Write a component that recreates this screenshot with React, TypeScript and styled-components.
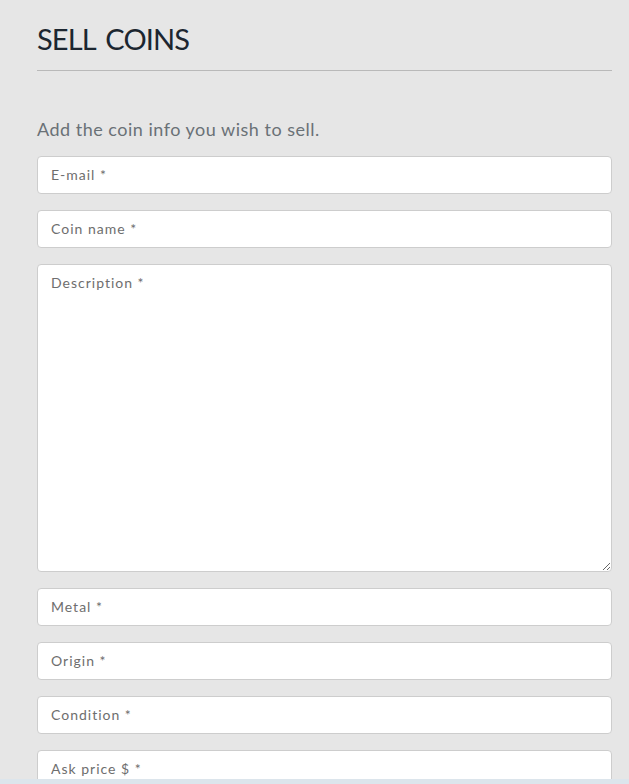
import React from "react";
import styled, { createGlobalStyle } from "styled-components";

const GlobalStyle = createGlobalStyle`
  html, body {
    margin: 0;
    padding: 0;
    background: #e6e6e6;
  }
  body {
    font-family: Lato, "Liberation Sans", sans-serif;
  }
  * { box-sizing: border-box; }
`;

const Page = styled.main`
  padding: 21px 17px 40px 37px;
  width: 629px;
`;

const Header = styled.header`
  border-bottom: 1px solid #b9b9b9;
  padding-bottom: 13px;
`;

const Title = styled.h1`
  margin: 0;
  font-family: Lato, "Liberation Sans", sans-serif;
  font-weight: 400;
  font-size: 29px;
  line-height: 36px;
  letter-spacing: -0.9px;
  word-spacing: 4px;
  color: #1c2630;
`;

const Intro = styled.p`
  margin: 47px 0 16px;
  font-size: 18px;
  line-height: 22px;
  letter-spacing: 0.5px;
  color: #6a7176;
`;

const Form = styled.form`
  display: flex;
  flex-direction: column;
  gap: 16px;
`;

const fieldBase = `
  display: block;
  width: 100%;
  margin: 0;
  background: #ffffff;
  border: 1px solid #cdcdcd;
  border-radius: 4px;
  font-family: Lato, "Liberation Sans", sans-serif;
  font-size: 14px;
  letter-spacing: 1px;
  color: #333;
  outline: none;
  &::placeholder {
    color: #6e6e6e;
    opacity: 1;
  }
`;

const Input = styled.input`
  ${fieldBase}
  height: 38px;
  padding: 0 13px 1px;
`;

const TextArea = styled.textarea`
  ${fieldBase}
  height: 308px;
  padding: 7px 13px;
  line-height: 21px;
  resize: vertical;
`;

const BottomBar = styled.div`
  position: fixed;
  left: 0;
  right: 0;
  bottom: 0;
  height: 5px;
  background: #dce5ec;
`;

export default function App() {
  return (
    <>
      <GlobalStyle />
      <Page>
        <Header>
          <Title>SELL COINS</Title>
        </Header>
        <Intro>Add the coin info you wish to sell.</Intro>
        <Form onSubmit={(e) => e.preventDefault()}>
          <Input type="email" placeholder="E-mail *" />
          <Input type="text" placeholder="Coin name *" />
          <TextArea placeholder="Description *" />
          <Input type="text" placeholder="Metal *" />
          <Input type="text" placeholder="Origin *" />
          <Input type="text" placeholder="Condition *" />
          <Input type="text" placeholder="Ask price $ *" />
          <Input type="text" placeholder="Year *" />
        </Form>
      </Page>
      <BottomBar />
    </>
  );
}
